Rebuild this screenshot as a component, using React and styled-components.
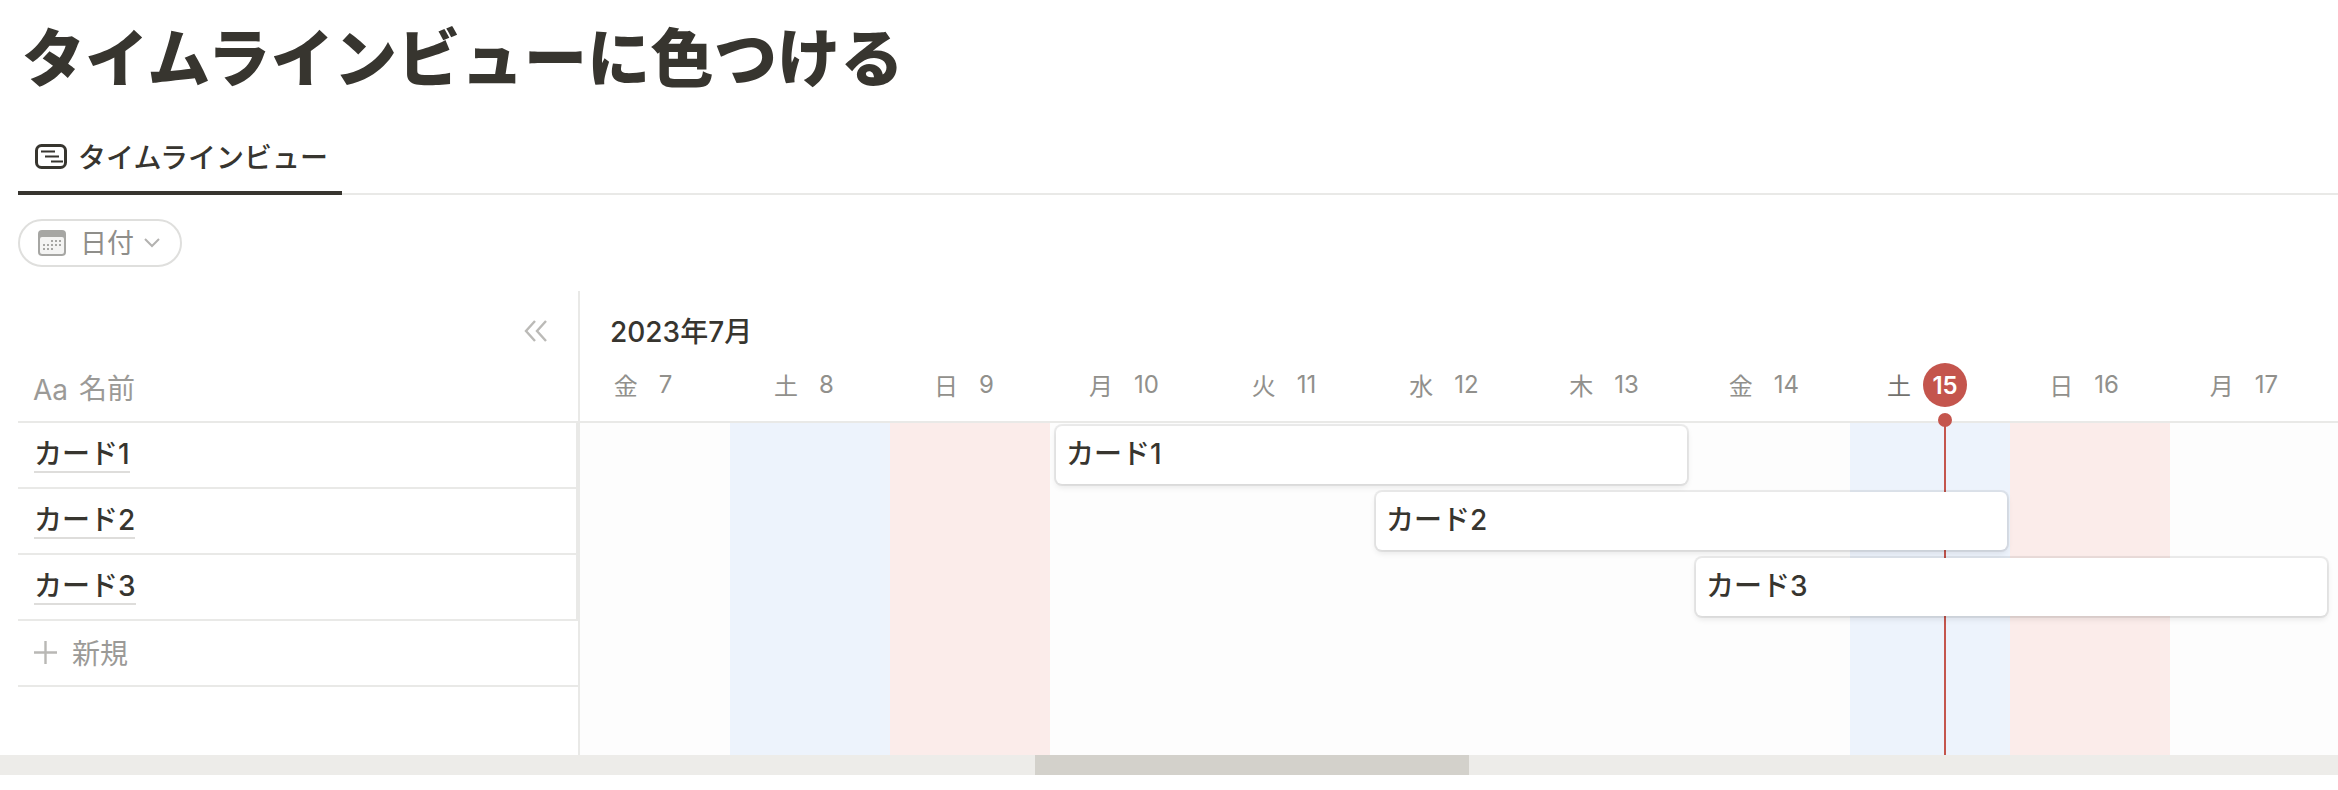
import React from "react";
import styled, { createGlobalStyle } from "styled-components";

const GlobalStyle = createGlobalStyle`
  html, body {
    margin: 0;
    padding: 0;
    background: #fff;
    overflow: hidden;
  }
  body {
    font-family: "Inter", "Noto Sans CJK JP", sans-serif;
    color: #37352f;
  }
`;

const Page = styled.div`
  width: 2338px;
  height: 790px;
`;

const Title = styled.h1`
  margin: 0;
  padding: 3px 0 0 22px;
  height: 107px;
  font-size: 63px;
  letter-spacing: 0.3px;
  line-height: 110px;
  font-weight: 900;
`;

const TabBar = styled.div`
  display: flex;
  margin: 15px 0 0 18px;
  height: 68px;
  border-bottom: 2px solid #e9e9e7;
`;

const Tab = styled.div`
  display: flex;
  align-items: center;
  gap: 11px;
  width: 324px;
  height: 70px;
  box-sizing: border-box;
  padding: 0 0 4px 17px;
  border-bottom: 4px solid #37352f;
  font-size: 28px;
  font-weight: 500;
`;

const PillRow = styled.div`
  padding: 24px 0 0 18px;
`;

const Pill = styled.div`
  display: flex;
  align-items: center;
  width: 164px;
  height: 48px;
  box-sizing: border-box;
  padding-left: 18px;
  border: 2px solid #dfdfdd;
  border-radius: 24px;
  color: #8f8e8a;
  font-size: 27px;
`;

const PillLabel = styled.span`
  margin: 0 10px 0 14px;
  padding-bottom: 4px;
`;

const Board = styled.div`
  display: flex;
  margin-top: 24px;
  height: 464px;
`;

const Sidebar = styled.div`
  display: flex;
  flex-direction: column;
  width: 580px;
  flex: none;
  padding-left: 18px;
  box-sizing: border-box;
`;

const SideHead = styled.div`
  position: relative;
  display: flex;
  align-items: flex-end;
  height: 132px;
  box-sizing: border-box;
  padding: 0 0 14px 15px;
  border-bottom: 2px solid #e9e9e7;
  border-right: 2px solid #e9e9e7;
  color: #9b9a97;
  font-size: 28px;
`;

const Collapse = styled.svg`
  position: absolute;
  top: 29px;
  right: 30px;
`;

const Aa = styled.span`
  margin-right: 11px;
  font-size: 28px;
`;

const Row = styled.div`
  display: flex;
  align-items: center;
  height: 66px;
  box-sizing: border-box;
  padding-left: 16px;
  border-bottom: 2px solid #e9e9e7;
  border-right: ${(p) => (p.$thick ? "4px" : "2px")} solid #e9e9e7;
  font-size: 28px;
`;

const RowName = styled.span`
  font-weight: 500;
  line-height: 34px;
  border-bottom: 2px solid #dedddb;
`;

const NewRow = styled(Row)`
  gap: 15px;
  padding-bottom: 2px;
  color: #9b9a97;
`;

const SideRest = styled.div`
  flex: 1;
  border-right: 2px solid #e9e9e7;
`;

const Timeline = styled.div`
  flex: 1;
  display: flex;
  flex-direction: column;
`;

const TimeHead = styled.div`
  display: flex;
  flex-direction: column;
  justify-content: flex-end;
  height: 132px;
  box-sizing: border-box;
  padding-bottom: 14px;
  border-bottom: 2px solid #e9e9e7;
`;

const Month = styled.div`
  padding-left: 30px;
  margin-bottom: 11px;
  font-size: 28px;
  font-weight: 500;
  line-height: 40px;
`;

const DayGrid = styled.div`
  display: grid;
  grid-template-columns: 150px repeat(10, 160px) 1fr;
`;

const DayHead = styled.div`
  display: flex;
  align-items: center;
  justify-content: center;
  gap: ${(p) => (p.$today ? "12px" : "21px")};
  height: 44px;
  padding-right: ${(p) => (p.$first ? "24px" : p.$today ? "6px" : "12px")};
  color: ${(p) => (p.$today ? "#73726e" : "#91908c")};
  font-size: 24px;

  > span:first-child {
    padding-bottom: 1px;
  }
`;

const TodayBadge = styled.span`
  display: flex;
  align-items: center;
  justify-content: center;
  width: 44px;
  height: 44px;
  border-radius: 50%;
  background: #c4554d;
  color: #fff;
  font-weight: 600;
`;

const DayNumber = styled.span`
  padding-bottom: 1px;
`;

const TimeBody = styled.div`
  flex: 1;
  display: grid;
  grid-template-columns: 150px repeat(10, 160px) 1fr;
  grid-template-rows: repeat(3, 66px) 1fr;
  background: #fdfdfd;
`;

const DayColumn = styled.div`
  position: relative;
  grid-row: 1 / -1;
  grid-column: ${(p) => p.$col};
  background: ${(p) => p.$bg};
`;

const TodayLine = styled.div`
  position: absolute;
  top: -9px;
  bottom: 0;
  left: 94px;
  width: 2px;
  background: #c4554d;

  &::before {
    content: "";
    position: absolute;
    top: -1px;
    left: -6px;
    width: 14px;
    height: 14px;
    border-radius: 50%;
    background: #c4554d;
  }
`;

const Card = styled.div`
  position: relative;
  grid-row: ${(p) => p.$row};
  grid-column: ${(p) => p.$col} / span 4;
  display: flex;
  align-items: center;
  height: 58px;
  margin: 3px 3px 0 6px;
  padding: 0 0 6px 10px;
  box-sizing: border-box;
  border-radius: 6px;
  background: #fff;
  box-shadow: rgba(15, 15, 15, 0.07) 0 0 0 2px, rgba(15, 15, 15, 0.1) 0 3px 6px;
  font-size: 28px;
  font-weight: 500;
`;

const Scrollbar = styled.div`
  height: 20px;
  background: #edece9;
`;

const Thumb = styled.div`
  margin-left: 1035px;
  width: 434px;
  height: 100%;
  background: #d3d1cb;
`;

const TimelineIcon = () => (
  <svg width="32" height="25" viewBox="0 0 32 25" fill="none" stroke="#37352f">
    <rect x="1.5" y="1.5" width="29" height="22" rx="5" strokeWidth="3" />
    <path d="M6 7.5h14M10 12.5h14M16 17.5h12" strokeWidth="2" />
  </svg>
);

const CalendarIcon = () => {
  const dots = [
    [14, 11], [18, 11], [22, 11],
    [6, 15], [10, 15], [14, 15], [18, 15], [22, 15],
    [6, 19], [10, 19], [14, 19],
  ];
  return (
    <svg width="28" height="26" viewBox="0 0 28 26">
      <rect width="28" height="26" rx="4" fill="#a6a6a3" />
      <rect x="2" y="7" width="24" height="17" rx="2" fill="#f4f4f3" />
      {dots.map(([x, y]) => (
        <rect key={`${x}-${y}`} x={x - 1} y={y - 1} width="2" height="2" fill="#a6a6a3" />
      ))}
    </svg>
  );
};

const Chevron = () => (
  <svg width="16" height="10" viewBox="0 0 16 10" fill="none" stroke="#b3b2b0" strokeWidth="2">
    <path d="M1 1l7 7 7-7" />
  </svg>
);

const DoubleChevron = () => (
  <Collapse width="24" height="22" viewBox="0 0 24 22" fill="none" stroke="#bbbab7" strokeWidth="2.4">
    <path d="M11 1L2 11l9 10M22 1l-9 10 9 10" />
  </Collapse>
);

const Plus = () => (
  <svg width="23" height="23" viewBox="0 0 23 23" stroke="#b9b8b5" strokeWidth="2.4">
    <path d="M11.5 0v23M0 11.5h23" />
  </svg>
);

const days = [
  ["金", 7], ["土", 8], ["日", 9], ["月", 10], ["火", 11], ["水", 12],
  ["木", 13], ["金", 14], ["土", 15], ["日", 16], ["月", 17],
];
const columnBg = { 土: "#edf3fc", 日: "#fbecea" };
const cards = ["カード1", "カード2", "カード3"];

export default function App() {
  return (
    <Page>
      <GlobalStyle />
      <Title>タイムラインビューに色つける</Title>
      <TabBar>
        <Tab>
          <TimelineIcon />
          タイムラインビュー
        </Tab>
      </TabBar>
      <PillRow>
        <Pill>
          <CalendarIcon />
          <PillLabel>日付</PillLabel>
          <Chevron />
        </Pill>
      </PillRow>
      <Board>
        <Sidebar>
          <SideHead>
            <DoubleChevron />
            <Aa>Aa</Aa>
            名前
          </SideHead>
          {cards.map((name) => (
            <Row key={name} $thick>
              <RowName>{name}</RowName>
            </Row>
          ))}
          <NewRow>
            <Plus />
            新規
          </NewRow>
          <SideRest />
        </Sidebar>
        <Timeline>
          <TimeHead>
            <Month>2023年7月</Month>
            <DayGrid>
              {days.map(([name, date], i) => (
                <DayHead key={date} $first={i === 0} $today={date === 15}>
                  <span>{name}</span>
                  {date === 15 ? <TodayBadge>{date}</TodayBadge> : <DayNumber>{date}</DayNumber>}
                </DayHead>
              ))}
            </DayGrid>
          </TimeHead>
          <TimeBody>
            {days.map(([name, date], i) => (
              <DayColumn key={date} $col={i + 1} $bg={columnBg[name] || "transparent"}>
                {date === 15 && <TodayLine />}
              </DayColumn>
            ))}
            {cards.map((name, i) => (
              <Card key={name} $row={i + 1} $col={4 + i * 2}>
                {name}
              </Card>
            ))}
          </TimeBody>
        </Timeline>
      </Board>
      <Scrollbar>
        <Thumb />
      </Scrollbar>
    </Page>
  );
}
